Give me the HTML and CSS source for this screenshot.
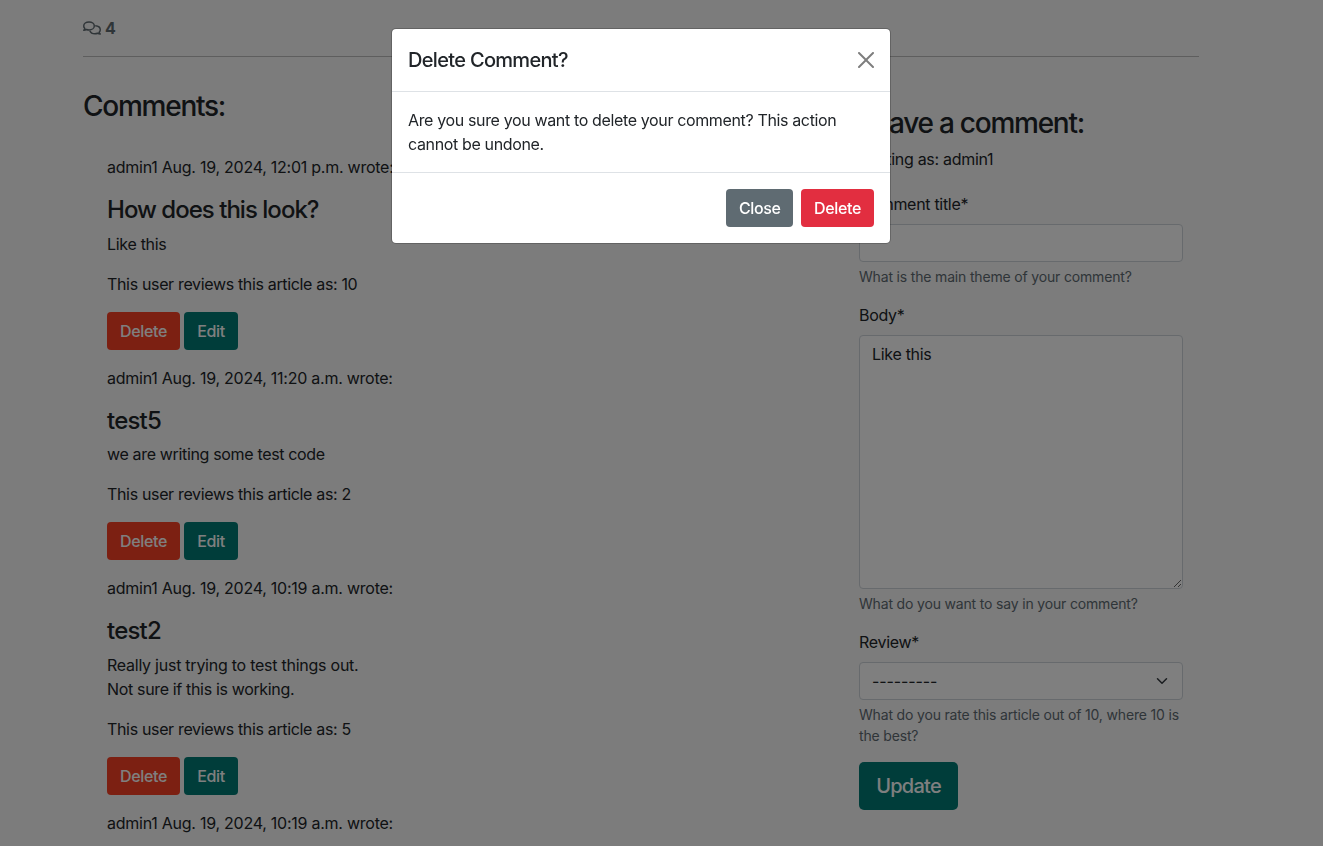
FILE: index.html
```html
<!DOCTYPE html>
<html lang="en">
<head>
<meta charset="utf-8">
<title>Comments</title>
<link rel="stylesheet" href="styles.css">
</head>
<body>
<main class="container">
  <div class="count">
    <svg class="count-icon" viewBox="0 0 640 512" fill="none" stroke="currentColor" stroke-width="52" stroke-linejoin="round"><path d="M214 40C110 40 26 104 26 184c0 34 14 66 40 90-6 24-20 44-38 62 36 0 72-12 98-28 27 11 56 18 88 18 104 0 188-64 188-143S318 40 214 40z"/><path d="M434 176c102 6 180 66 180 142 0 34-14 66-40 90 6 24 20 44 38 62-36 0-72-12-98-28-27 11-56 18-88 18-88 0-160-44-182-108"/></svg>
    <strong>4</strong>
  </div>
  <hr class="rule">
  <div class="row">
    <section class="comments">
      <h3 class="title">Comments:</h3>
      <div class="list">
        <article class="comment">
          <p class="text meta">admin1 Aug. 19, 2024, 12:01 p.m. wrote:</p>
          <h4 class="subject phrase">How does this look?</h4>
          <p class="text">Like this</p>
          <p class="text score">This user reviews this article as: 10</p>
          <div class="actions"><button class="btn btn-remove">Delete</button><button class="btn btn-edit">Edit</button></div>
        </article>
        <article class="comment">
          <p class="text meta">admin1 Aug. 19, 2024, 11:20 a.m. wrote:</p>
          <h4 class="subject">test5</h4>
          <p class="text score">we are writing some test code</p>
          <p class="text score">This user reviews this article as: 2</p>
          <div class="actions"><button class="btn btn-remove">Delete</button><button class="btn btn-edit">Edit</button></div>
        </article>
        <article class="comment">
          <p class="text meta">admin1 Aug. 19, 2024, 10:19 a.m. wrote:</p>
          <h4 class="subject">test2</h4>
          <p class="text"><span class="meta">Really just trying to test things out.</span><br><span class="score">Not sure if this is working.</span></p>
          <p class="text score">This user reviews this article as: 5</p>
          <div class="actions"><button class="btn btn-remove">Delete</button><button class="btn btn-edit">Edit</button></div>
        </article>
        <article class="comment">
          <p class="text meta">admin1 Aug. 19, 2024, 10:19 a.m. wrote:</p>
        </article>
      </div>
    </section>
    <aside class="side">
      <h3 class="title">Leave a comment:</h3>
      <p class="text author">Posting as: admin1</p>
      <form class="form">
        <div class="field">
          <label class="label" for="title">Comment title*</label>
          <input class="control" id="title" type="text">
          <small class="help">What is the main theme of your comment?</small>
        </div>
        <div class="field">
          <label class="label" for="body">Body*</label>
          <textarea class="control area" id="body">Like this</textarea>
          <small class="help">What do you want to say in your comment?</small>
        </div>
        <div class="field">
          <label class="label" for="review">Review*</label>
          <div class="control select" id="review">
            <span class="dashes">---------</span>
            <svg class="chevron" viewBox="0 0 16 16" fill="none" stroke="#343a40" stroke-linecap="round" stroke-linejoin="round" stroke-width="2"><path d="M2 5l6 6 6-6"/></svg>
          </div>
          <small class="help">What do you rate this article out of 10, where 10 is the best?</small>
        </div>
        <button class="btn btn-edit btn-lg" type="button">Update</button>
      </form>
    </aside>
  </div>
</main>
<div class="backdrop">
  <div class="modal">
    <div class="modal-header">
      <h5 class="modal-title">Delete Comment?</h5>
      <svg class="close" viewBox="0 0 16 16"><path d="M.293.293a1 1 0 011.414 0L8 6.586 14.293.293a1 1 0 111.414 1.414L9.414 8l6.293 6.293a1 1 0 01-1.414 1.414L8 9.414l-6.293 6.293a1 1 0 01-1.414-1.414L6.586 8 .293 1.707a1 1 0 010-1.414z"/></svg>
    </div>
    <div class="modal-body">Are you sure you want to delete your comment? This action cannot be undone.</div>
    <div class="modal-footer"><button class="btn btn-close">Close</button><button class="btn btn-danger">Delete</button></div>
  </div>
</div>
</body>
</html>
```
FILE: styles.css
```css
* { box-sizing: border-box; }
body {
  margin: 0;
  height: 846px;
  overflow: hidden;
  background: #f8f8f8;
  color: #212529;
  font: 400 16px/1.5 Inter, "Liberation Sans", sans-serif;
  letter-spacing: -0.3px;
}
h3, h4, h5, p { margin: 0; }
.container { width: 1116px; margin-left: 83px; padding-top: 16px; }
.count { display: flex; align-items: center; gap: 4px; height: 24px; color: #5f6a70; }
.count-icon { width: 18px; height: 16px; }
.rule { height: 1px; margin: 16px 0 0; border: 0; background: #bcbcbc; }
.row { display: flex; justify-content: space-between; }
.comments { padding-top: 32px; }
.title { padding-top: 1px; font-size: 28px; font-weight: 550; line-height: 33.6px; letter-spacing: -1.25px; margin-bottom: 7px; }
.list { padding: 24.2px 24px 0; }
.comment { margin-bottom: 16px; }
.text { margin-bottom: 16px; }
.meta { letter-spacing: -0.25px; }
.score { letter-spacing: -0.34px; }
.subject { padding-top: 1px; font-size: 24px; font-weight: 550; line-height: 28.8px; margin-bottom: 7px; letter-spacing: -0.8px; }
.phrase { letter-spacing: -0.98px; }
.actions { display: flex; gap: 4px; }
.btn {
  height: 38px;
  min-width: 54px;
  padding: 0 13px;
  border: 0;
  border-radius: 4px;
  color: #fff;
  font: inherit;
  font-weight: 450;
  letter-spacing: -0.36px;
  white-space: nowrap;
}
.btn-remove { width: 73px; background: #f84024; }
.btn-edit { background: #007a74; }
.btn-close { width: 67px; background: #5f6b72; }
.btn-danger { width: 73px; background: #e22e40; }
.btn-lg { width: 99px; height: 48px; padding: 0; border-radius: 5px; font-size: 20px; letter-spacing: -0.75px; }
.side { width: 356px; padding: 48.6px 16px 0; }
.author { margin-bottom: 20.4px; }
.field { display: flex; flex-direction: column; margin-bottom: 16px; }
.label { margin-bottom: 8px; }
.control {
  width: 100%;
  height: 38px;
  padding: 6px 12px;
  border: 1px solid #ced4da;
  border-radius: 4px;
  background: #fff;
  color: #212529;
  font: inherit;
  letter-spacing: inherit;
}
.area { height: 254px; resize: vertical; }
.select { display: flex; align-items: center; justify-content: space-between; }
.dashes { letter-spacing: -0.1px; }
.chevron { width: 16px; height: 12px; }
.help { margin-top: 4px; color: #5f6b72; font-size: 14px; line-height: 21px; letter-spacing: -0.17px; }
.backdrop { position: fixed; inset: 0; padding: 28px 0 0 391px; background: rgba(0, 0, 0, .5); }
.modal {
  width: 500px;
  border: 1px solid rgba(0, 0, 0, .2);
  border-radius: 5px;
  background: #fff;
  background-clip: padding-box;
}
.modal-header { display: flex; align-items: center; justify-content: space-between; height: 63px; padding: 0 16px; border-bottom: 1px solid #dee2e6; }
.modal-title { font-size: 20px; font-weight: 550; line-height: 30px; letter-spacing: -0.68px; }
.close { width: 16px; height: 16px; opacity: .5; }
.modal-body { height: 80px; padding: 16px; letter-spacing: -0.36px; }
.modal-footer { display: flex; justify-content: flex-end; gap: 8px; height: 71px; padding: 16px; border-top: 1px solid #dee2e6; }
```
